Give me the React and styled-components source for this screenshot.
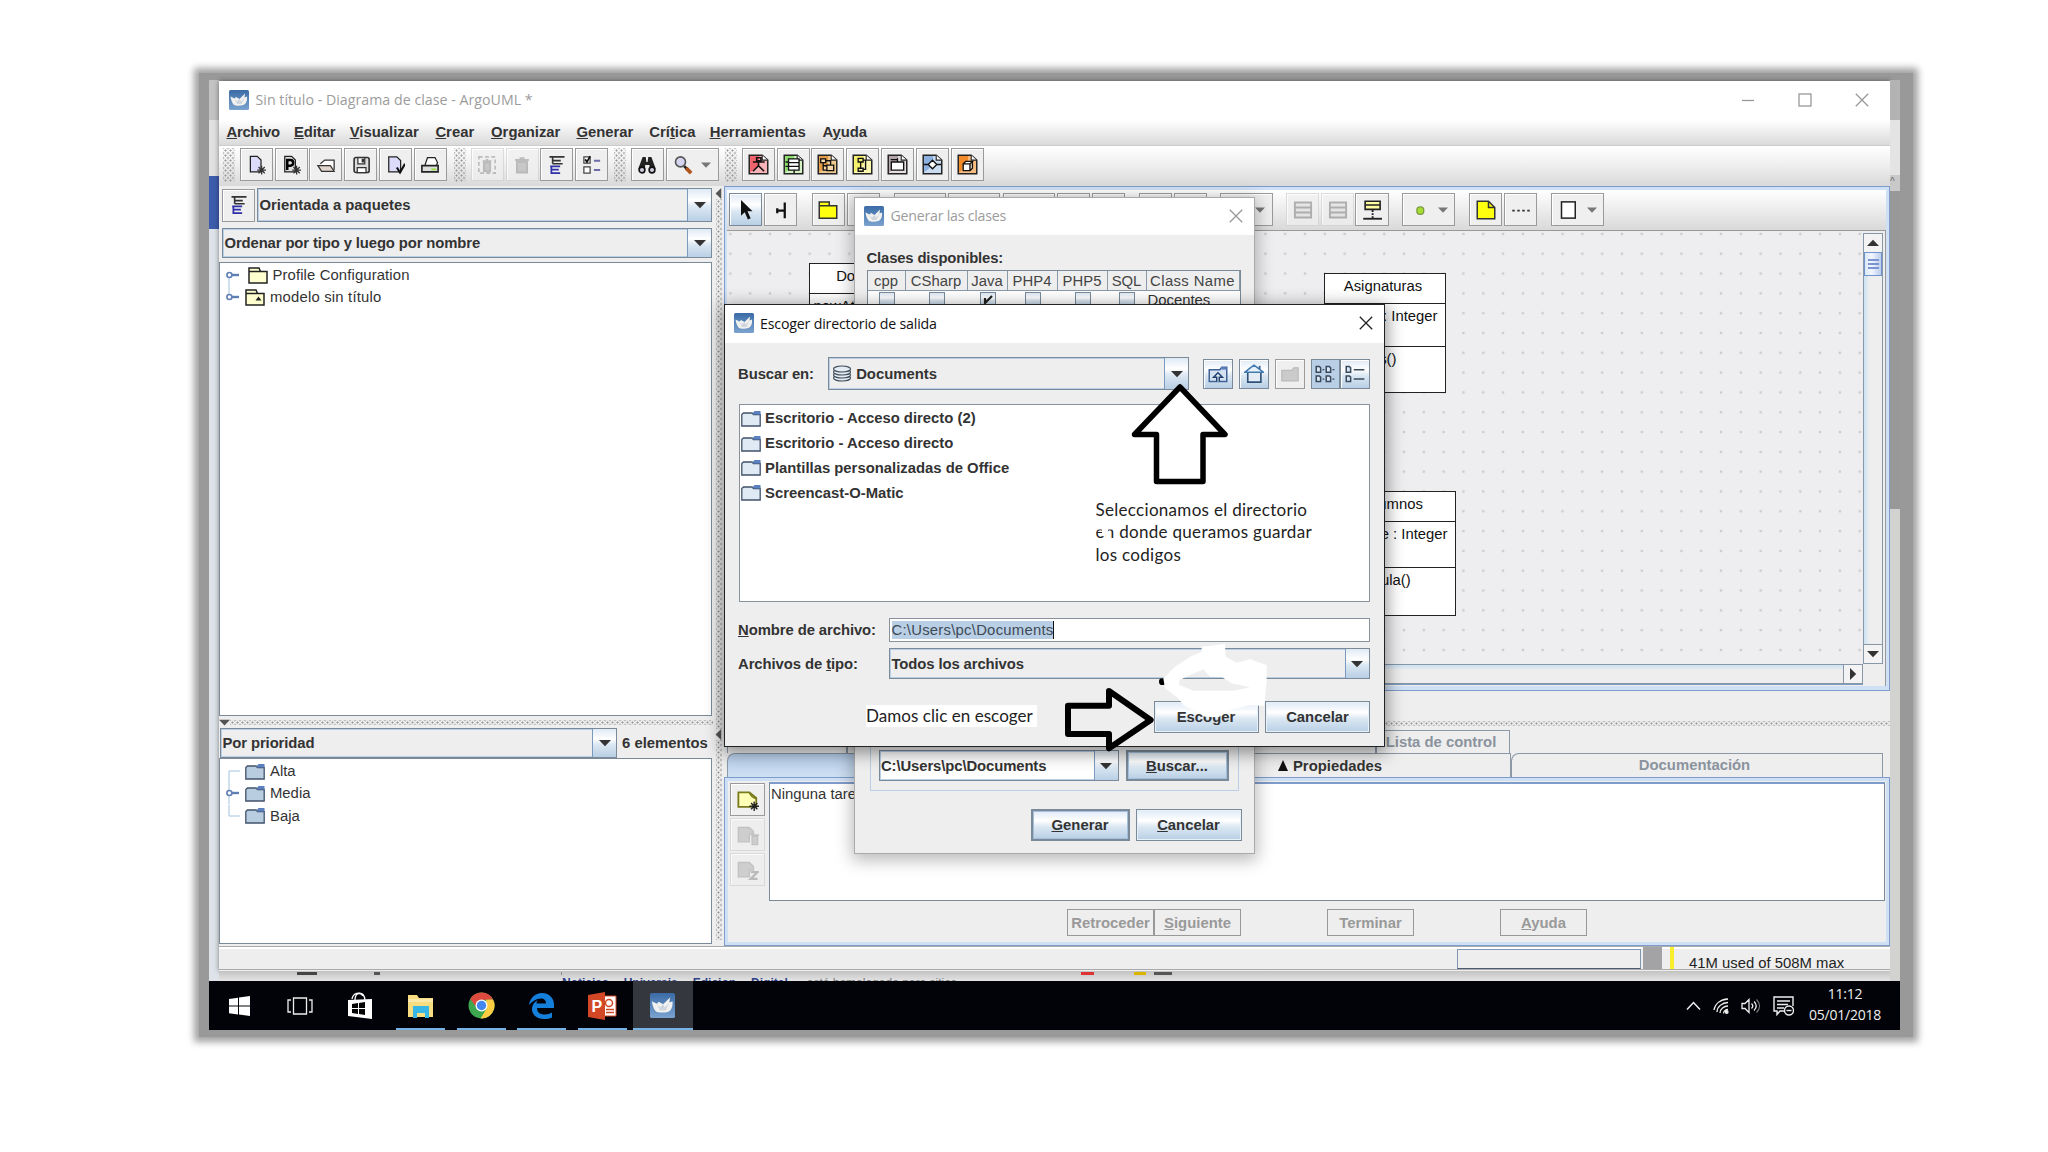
import React from "react";
import styled, { createGlobalStyle, css } from "styled-components";

const GlobalStyle = createGlobalStyle`
  * {
    box-sizing: border-box;
  }

  body {
    margin: 0;
    background: #fff;
    font-family: "Liberation Sans", Arial, sans-serif;
    font-size: 14.85px;
    color: #333;
    overflow: hidden;
  }
`;

const dots = css`
  background-image: radial-gradient(circle, #9a9a9a 0.8px, transparent 1.3px),
    radial-gradient(circle, #9a9a9a 0.8px, transparent 1.3px);
  background-size: 5px 5px;
  background-position: 0 0, 2.5px 2.5px;
`;

const steel = "linear-gradient(#dfeaf5, #fff 35%, #dce8f3 55%, #b8cfe5)";

const Page = styled.div`
  position: relative;
  width: 2048px;
  height: 1152px;
  padding: 73px 0 0 199px;
`;

const Frame = styled.div`
  width: 1714px;
  height: 964px;
  padding: 7px 13px 7px 10px;
  background: #999;
  box-shadow: 0 0 7px 5px #a2a2a2;
`;

const Screen = styled.div`
  width: 1691px;
  height: 950px;
  display: flex;
  flex-direction: column;
`;

const Desktop = styled.div`
  flex: 1;
  display: flex;
  min-height: 0;
`;

const LeftStrip = styled.div`
  width: 10px;
  background: linear-gradient(
    #c3c3c3 40px,
    #e0e0e0 40px 96px,
    #3d5cab 96px 149px,
    #dee3e9 149px
  );
`;

const RightStrip = styled.div`
  width: 10px;
  padding-top: 96px;
  font-size: 10px;
  color: #666;
  background: linear-gradient(
    #b3b3b3 40px,
    #e4e4e4 40px 95px,
    #c9c9c9 95px 111px,
    #989898 111px 429px,
    #d2d2d0 429px
  );
`;

const Center = styled.div`
  width: 1671px;
`;

const Main = styled.div`
  height: 890px;
  margin-top: 1px;
  background: #eee;
  display: flex;
  flex-direction: column;
  box-shadow: 0 0 5px rgba(0, 0, 0, 0.45);
`;

const Peek = styled.div`
  height: 10px;
  padding-top: 5px;
  display: flex;
  overflow: hidden;
  font-size: 12px;
  line-height: 14px;
  font-weight: bold;
  color: #2f4288;
  background: linear-gradient(#c2c2c2, #e4e4e4);
  white-space: nowrap;

  span {
    margin-right: 15px;
  }

  i {
    font-style: normal;
    font-weight: normal;
    color: #777;
    margin-left: 4px;
  }
`;

const Smudge = styled.div`
  width: ${(p) => p.$w}px;
  height: 3px;
  margin: -4px 0 0 ${(p) => p.$ml}px;
  flex: none;
  background: ${(p) => p.$c};
`;

const TitleBar = styled.div`
  display: flex;
  align-items: center;
  height: ${(p) => p.$h}px;
  flex: none;
  padding: 0 11px 2px ${(p) => p.$pl ?? 9}px;
  background: #fff;
  font-family: "Open Sans", "Noto Sans", sans-serif;
  font-size: 14.2px;
  letter-spacing: ${(p) => p.$ls ?? -0.24}px;
  color: ${(p) => (p.$active ? "#111" : "#9c9c9c")};

  > span {
    flex: 1;
    margin-left: 6.5px;
    white-space: nowrap;
  }
`;

const Controls = styled.div`
  display: flex;
  gap: 43px;
  padding-right: 10px;
`;

const MenuBar = styled.div`
  display: flex;
  align-items: center;
  flex: none;
  height: 26px;
  padding: 0 0 2px 7.5px;
  font-weight: bold;
  background: linear-gradient(#fff, #dadada);
  border-bottom: 1px solid #ccc;
`;

const MenuItem = styled.span`
  width: ${(p) => p.$w}px;
  letter-spacing: ${(p) => p.$ls || 0}px;
`;

const MainToolBar = styled.div`
  display: flex;
  align-items: center;
  flex: none;
  height: 40px;
  padding: 0 0 2px 4px;
  background: linear-gradient(#fff, #f0f0f0 45%, #d9d9d9);
`;

const ToolGroup = styled.div`
  display: flex;
  gap: 1.8px;
  width: ${(p) => p.$w}px;
`;

const Grip = styled.div`
  width: 12px;
  height: 34px;
  margin-right: 3px;
  ${dots}
`;

const Tool = styled.div`
  display: flex;
  align-items: center;
  justify-content: center;
  gap: 8px;
  flex: none;
  width: ${(p) => p.$w || 33}px;
  height: ${(p) => p.$h || 33}px;
  margin-left: ${(p) => p.$ml || 0}px;
  border: 1px solid ${(p) => (p.$off ? "#d2d2d2" : p.$on ? "#7a8a99" : "#9a9a9a")};
  background: ${(p) => (p.$pressed ? "#b8cfe5" : p.$on ? steel : "#efefef")};
  opacity: ${(p) => (p.$off ? 0.75 : 1)};
  box-shadow: ${(p) => (p.$pressed ? "none" : "inset 1px 1px 0 #fff")};
`;

const Body = styled.div`
  display: flex;
  flex: none;
  height: 760px;
`;

const Left = styled.div`
  width: 494px;
  padding-top: 2px;
  display: flex;
  flex-direction: column;
`;

const Row = styled.div`
  display: flex;
  align-items: center;
  flex: none;
  height: ${(p) => p.$h}px;
  margin-top: ${(p) => p.$mt || 0}px;
  padding-left: ${(p) => p.$pl || 0}px;
  gap: ${(p) => p.$gap || 0}px;
`;

const ComboBox = styled.div`
  display: flex;
  align-items: center;
  flex: none;
  width: ${(p) => p.$w}px;
  height: ${(p) => p.$h}px;
  padding-left: ${(p) => p.$pl || 1.5}px;
  border: 1px solid #7a8a99;
  box-shadow: inset 0 0 0 1px #b8cfe5;
  background: ${(p) => (p.$white ? "#fff" : "#eee")};
  font-weight: bold;
  letter-spacing: ${(p) => p.$ls || 0}px;
  white-space: nowrap;

  > span {
    flex: 1;
  }
`;

const ComboArrow = styled.div`
  display: flex;
  align-items: center;
  justify-content: center;
  width: 24px;
  height: 100%;
  border-left: 1px solid #7a9ac0;
  background: ${steel};
`;

const Tree = styled.div`
  flex: none;
  width: 493px;
  height: ${(p) => p.$h}px;
  margin-top: ${(p) => p.$mt || 0}px;
  padding-top: ${(p) => p.$pt}px;
  border: 1px solid #7a8a99;
  background: #fff;
`;

const TreeRow = styled.div`
  display: flex;
  align-items: center;
  height: 22.3px;
  padding-left: 6px;

  > span {
    margin-left: 5px;
    letter-spacing: ${(p) => p.$ls || 0}px;
  }
`;

const Folder = styled.svg`
  margin-left: ${(p) => p.$ml || 0}px;
  flex: none;
`;

const HSplit = styled.div`
  display: flex;
  align-items: center;
  flex: none;
  height: ${(p) => p.$h}px;

  div {
    flex: 1;
    height: 5px;
    ${dots}
  }
`;

const VSplit = styled.div`
  display: flex;
  flex-direction: column;
  align-items: center;
  width: 11px;
  padding-top: 2px;
`;

const VDots = styled.div`
  width: 6px;
  height: ${(p) => p.$len}px;
  ${dots}
`;

const Right = styled.div`
  width: 1166px;
  display: flex;
  flex-direction: column;
`;

const Editor = styled.div`
  flex: none;
  height: 505px;
  padding: 3px 3px 4px 2px;
  background: #cfe0f4;
  border: 1.5px solid #7d9bcb;
  display: flex;
  flex-direction: column;
`;

const EditorTools = styled.div`
  display: flex;
  align-items: flex-start;
  flex: none;
  height: 41px;
  padding: 3px 0 0 2px;
  background: linear-gradient(#fff, #f0f0f0 40%, #d9d9d9);
  border-bottom: 1px solid #999;
`;

const EditorBody = styled.div`
  flex: 1;
  display: grid;
  grid-template-columns: 1136px 20px;
  grid-template-rows: 432px 20px;
  background: #eee;
  border-right: 1px solid #999;
  padding-top: 1px;
`;

const Canvas = styled.div`
  position: relative;
  overflow: hidden;
  background-color: #eeedef;
  background-image: radial-gradient(circle, #cccccc 1px, transparent 1.7px);
  background-size: 19.82px 19.82px;
  background-position: -6.5px -8px;
`;

const ClassNode = styled.div`
  position: absolute;
  left: ${(p) => p.$x}px;
  top: ${(p) => p.$y}px;
  width: ${(p) => p.$w}px;
  border: 1.5px solid #222;
  background: #fff;
  color: #111;

  > div {
    height: ${(p) => p.$attrH || 43}px;
    padding: 4px ${(p) => p.$pr || 5}px 0 4px;
    border-top: 1.5px solid #222;
    text-align: ${(p) => p.$align || "right"};
    white-space: nowrap;
    overflow: hidden;
  }

  > div:first-child {
    height: 29px;
    border: 0;
    text-align: center;
  }

  > div:last-child {
    height: ${(p) => p.$opH || 46}px;
    padding-right: ${(p) => p.$opPad || 50}px;
  }
`;

const VScroll = styled.div`
  display: flex;
  flex-direction: column;
  height: 431px;
  margin-top: 1px;
  border: 1px solid #8797a8;
  box-shadow: inset 3px 0 3px #cfe3f3;

  > div:nth-child(2) {
    height: 24px;
    border: 1px solid #7093c9;
    background: linear-gradient(90deg, #dbe7f8, #f2f7ff 40%, #b9cdec);
    display: flex;
    flex-direction: column;
    justify-content: center;
    align-items: center;
    gap: 2px;
  }

  i {
    width: 11px;
    height: 2px;
    background: #7b93cf;
  }

  > span {
    flex: 1;
  }
`;

const HScroll = styled.div`
  display: flex;
  justify-content: flex-end;
  border: 1px solid #8797a8;
  box-shadow: inset 0 3px 3px #cfe3f3, 0 1px 0 #7a9ac0;
`;

const ScrollButton = styled.div`
  display: flex;
  align-items: center;
  justify-content: center;
  width: 18px;
  height: 18px;
  outline: 1px solid #8797a8;
  background: #f3f3f3;
`;

const Tabs = styled.div`
  display: flex;
  flex: none;
  height: ${(p) => p.$h}px;
  padding-left: 3px;
  font-weight: bold;
`;

const Tab = styled.div`
  display: flex;
  align-items: center;
  justify-content: center;
  gap: 5px;
  width: ${(p) => p.$w}px;
  padding: 0 ${(p) => p.$pr || 0}px ${(p) => p.$pb || 0}px 0;
  border: 1px solid #8b98a6;
  border-bottom: 0;
  border-top-left-radius: ${(p) => (p.$cut ? 8 : 0)}px;
  color: ${(p) => (p.$front ? "#333" : "#8a939d")};
  background: ${(p) => (p.$blue ? "linear-gradient(#b8d0ec, #cddff2)" : "#eee")};
`;

const Details = styled.div`
  flex: none;
  height: 169px;
  border: 1.5px solid #7d9bcb;
  background: #eee;
  box-shadow: inset 0 0 0 3px #cfe0f4;
  padding: 4px 4px 0 5px;
`;

const DetailsTop = styled.div`
  display: flex;
  gap: 4px;
  height: 119px;
`;

const SideTools = styled.div`
  display: flex;
  flex-direction: column;
  gap: 2px;
  padding-top: 1px;
  width: 35px;
`;

const TextPane = styled.div`
  flex: 1;
  padding: 2px 1px;
  border: 1px solid #7a8a99;
  border-top: 2px solid #7d9bcb;
  background: #fff;
`;

const Wizard = styled.div`
  display: flex;
  padding: 8px 0 0 337px;
  font-weight: bold;
  color: #999;
`;

const WizardButton = styled.div`
  width: 87px;
  height: 27px;
  margin-right: ${(p) => p.$mr || 0}px;
  border: 1px solid #999;
  display: flex;
  align-items: center;
  justify-content: center;
`;

const Status = styled.div`
  display: flex;
  flex: none;
  height: 24px;
  border-top: 1px solid #aaa;
  border-bottom: 1px solid #aaa;
  box-shadow: inset 0 2px 0 #fff;
`;

const Progress = styled.div`
  width: 184px;
  height: 20px;
  margin: 2px 2px 0 1238px;
  border: 1.5px solid #7f95b4;
  border-bottom-color: #4c5b72;
`;

const Block = styled.div`
  width: 19px;
  background: #a3a3a5;
`;

const Memory = styled.div`
  margin-left: 8px;
  border-left: 4px solid #f8ee2c;
  padding: 8px 0 0 15px;
  line-height: 16px;
  color: #222;
`;

const TaskBar = styled.div`
  display: flex;
  flex: none;
  height: 49px;
  background: #020308;
  color: #eee;
`;

const Task = styled.div`
  display: flex;
  align-items: center;
  justify-content: center;
  width: 60.5px;
  background: ${(p) => (p.$on ? "#34373d" : "none")};
  background-image: ${(p) =>
    p.$open || p.$on ? "linear-gradient(#76b4e8, #76b4e8)" : "none"};
  background-size: ${(p) => (p.$on ? "100%" : "49px")} 2.5px;
  background-repeat: no-repeat;
  background-position: bottom center;
`;

const Tray = styled.div`
  display: flex;
  align-items: center;
  gap: 12px;
  margin-left: auto;
  padding: 0 17px 0 0;
`;

const Clock = styled.div`
  width: 76px;
  margin: -2px 0 0 1px;
  text-align: center;
  font-family: "Open Sans", "Noto Sans", sans-serif;
  font-size: 14px;
  letter-spacing: -0.25px;
  line-height: 20.5px;
`;

const Window = styled.div`
  position: absolute;
  left: ${(p) => p.$x}px;
  top: ${(p) => p.$y}px;
  width: ${(p) => p.$w}px;
  height: ${(p) => p.$h}px;
  border: ${(p) => (p.$active ? "1.5px solid #222" : "1px solid #aaa")};
  background: #eee;
  box-shadow: 0 4px 16px 2px rgba(0, 0, 0, ${(p) => (p.$active ? 0.42 : 0.28)});
  display: flex;
  flex-direction: column;
`;

const GenerateBody = styled.div`
  flex: 1;
  display: flex;
  flex-direction: column;
  padding: 15px 12px 0 11.5px;

  > b {
    line-height: 17px;
    letter-spacing: -0.15px;
  }
`;

const ClassTable = styled.div`
  display: grid;
  grid-template-columns: 38px 62px 40px 50px 50px 39px 93px;
  width: 374px;
  margin-top: 3px;
  border: 1px solid #7a8a99;
  background: #eee;
  flex: none;
`;

const Th = styled.div`
  height: 20px;
  line-height: 21px;
  text-align: center;
  border-right: 1px solid #8a9aa9;
  border-bottom: 1px solid #8a9aa9;
  color: #444;
  white-space: nowrap;
  letter-spacing: ${(p) => p.$ls || 0}px;
`;

const Td = styled.div`
  height: 20px;
  line-height: 18px;
  padding: 0 1px;
  display: flex;
  justify-content: ${(p) => (p.$left ? "flex-start" : "center")};
  background: #fff;
`;

const Check = styled.div`
  width: 16px;
  height: 16px;
  margin-top: 1px;
  border: 1px solid #7a8a99;
  background: ${steel};
`;

const OutputBox = styled.div`
  display: flex;
  align-items: center;
  gap: 7px;
  width: 369px;
  height: 61px;
  margin: auto 0 0 3px;
  padding: 12px 8px 2px;
  border: 1px solid #b8cfe5;
  flex: none;
`;

const ButtonRow = styled.div`
  display: flex;
  justify-content: flex-end;
  flex: none;
  gap: ${(p) => p.$gap}px;
  margin: ${(p) => p.$mt}px ${(p) => p.$mr || 0}px 0 0;
  padding-bottom: ${(p) => p.$pb || 0}px;
`;

const Button = styled.div`
  display: flex;
  align-items: center;
  justify-content: center;
  width: ${(p) => p.$w}px;
  height: ${(p) => p.$h || 32}px;
  border: ${(p) => (p.$focus ? "2px" : "1px")} solid #7a8a99;
  box-shadow: inset 0 0 0 1px ${(p) => (p.$focus ? "#a3bfdc" : "#e9f1f8")};
  background: ${steel};
  font-weight: bold;
`;

const ChooserBody = styled.div`
  padding: 14px 13px 0 13.5px;
`;

const Label = styled.label`
  width: ${(p) => p.$w}px;
  font-weight: bold;
  letter-spacing: -0.08px;
  white-space: nowrap;
`;

const FileList = styled.div`
  height: 198px;
  margin: 14px 1px 0;
  padding: 1px 1px;
  border: 1px solid #8a939d;
  background: #fff;
  font-weight: bold;

  > div {
    display: flex;
    align-items: center;
    gap: 4px;
    height: 24.75px;
  }
`;

const Field = styled.div`
  flex: 1;
  display: flex;
  height: 24px;
  margin-right: 1px;
  padding: 2px 2px;
  border: 1px solid #8a939d;
  background: #fff;
  line-height: 19px;

  span {
    background: #b8cfe5;
    border-right: 1px solid #111;
    color: #3f4a55;
    letter-spacing: 0.25px;
  }
`;

const Note = styled.div`
  position: absolute;
  left: ${(p) => p.$x}px;
  top: ${(p) => p.$y}px;
  font-family: Lato, Carlito, sans-serif;
  font-size: 17px;
  line-height: 22.3px;
  letter-spacing: ${(p) => p.$ls}px;
  color: #222;
  background: #fff;
  white-space: pre;
`;

const Ink = styled.svg`
  position: absolute;
  left: ${(p) => p.$x}px;
  top: ${(p) => p.$y}px;
`;

const Triangle = ({ size = 12, dir = "down", color = "#333" }) => (
  <svg width={size} height={size} viewBox="0 0 12 12">
    <path
      d="M0 3h12L6 9.2z"
      fill={color}
      transform={`rotate(${{ down: 0, left: 90, up: 180, right: 270 }[dir]} 6 6)`}
    />
  </svg>
);

const Combo = ({ children, icon, ...rest }) => (
  <ComboBox {...rest}>
    {icon}
    <span>{children}</span>
    <ComboArrow>
      <Triangle />
    </ComboArrow>
  </ComboBox>
);

const Logo = ({ size = 20 }) => (
  <svg width={size} height={size} viewBox="0 0 20 20">
    <defs>
      <linearGradient id="sky" x1="0" y1="0" x2="0" y2="1">
        <stop offset="0" stopColor="#3b6ba6" />
        <stop offset="1" stopColor="#7ba3cf" />
      </linearGradient>
    </defs>
    <rect width="20" height="20" rx="1.500" fill="url(#sky)" />
    <path
      d="M1.500 6.500l4 2 1.500-1.500 3.500 2L16 3.500l-.5 4 2.500-1c.5 4-1 7.500-3.500 8.500-3 1-8 .8-9.500 0C3 13 2 10 1.500 6.500z"
      fill="#f1f1ef"
    />
    <path d="M5.500 8.500l2.500 3 2.500-2.500 1.500 2.500 3.500-4-3 6.500H8z" fill="#cfd6dd" />
  </svg>
);

const Close = ({ color = "#999" }) => (
  <svg width="14" height="14" viewBox="0 0 14 14">
    <path d="M.8.8l12.4 12.4M13.2.8L.8 13.2" stroke={color} strokeWidth="1.3" />
  </svg>
);

const Handle = ({ open = true, up, down }) => (
  <svg width="20" height="22.3" viewBox="0 0 20 22.3">
    {up && <path d="M3 0v11" stroke="#b8cfe5" strokeWidth="1.3" />}
    {down && <path d="M3 11v11.3" stroke="#b8cfe5" strokeWidth="1.3" />}
    {!open && <path d="M3 11h11" stroke="#b8cfe5" strokeWidth="1.3" />}
    {open && (
      <>
        <path d="M5 11h8" stroke="#5f7fb5" strokeWidth="2.4" />
        <circle cx="3.4" cy="11" r="2.5" fill="#fff" stroke="#5f7fb5" strokeWidth="1.6" />
      </>
    )}
  </svg>
);

const BlueFolder = ({ light, ml }) => (
  <Folder $ml={ml} width="20" height="17" viewBox="0 0 20 17">
    <path d="M.8 4.5L2.500 3h8.500l1.500 1.500h6.700V16H.8z" fill={light ? "#dfeaf4" : "#b9cde0"} stroke="#41526a" strokeWidth="1.3" />
    <path d="M11.500 3.200l2-2.200h6V4.500h-7z" fill="#5c7fc0" />
  </Folder>
);

const YellowFolder = ({ ml, model }) => (
  <Folder $ml={ml} width="20" height="17" viewBox="0 0 20 17">
    <path d="M1 4.5V1h10l1.500 3.500M1 4.500h18V16H1z" fill="#ffffcf" stroke="#222" strokeWidth="1.5" />
    {model && <path d="M10.500 11.500l3-4 3 4z" fill="#222" />}
  </Folder>
);

// 16px glyphs used by every toolbar
const glyphs = {
  newDoc: (
    <>
      <path d="M3.500 1h5.500l3 3V13.500h-8.500z" fill="#dcdcfa" stroke="#222" />
      <path d="M12.500 8.500v7M9 12h7M10 9.600l5 5M15 9.600l-5 5" stroke="#333" />
    </>
  ),
  newProject: (
    <>
      <path d="M3 1h5.500l3 3V13.500H3z" fill="#ddd" stroke="#222" />
      <path d="M5 12V4h2.500a2 2 0 010 4.500H5.500" fill="none" stroke="#000" strokeWidth="2" />
      <path d="M12.500 8.500v7M9 12h7M10 9.600l5 5M15 9.600l-5 5" stroke="#333" />
    </>
  ),
  open: (
    <>
      <path d="M3.500 7l3.500-3h7.500v8" fill="#fff" stroke="#333" />
      <path d="M1.500 8.500h10l3 4.500H4.500z" fill="#e2d5cb" stroke="#333" />
    </>
  ),
  save: (
    <>
      <rect x="2.500" y="2" width="12" height="12" rx="1.500" fill="#ddd" stroke="#333" strokeWidth="1.300" />
      <path d="M5.500 2h5.500v5H5.500zM5 10h7v4H5z" fill="#fff" stroke="#333" />
      <path d="M8.500 3h2v3h-2z" fill="#333" />
    </>
  ),
  props: (
    <>
      <path d="M3 1.500h6.500l3 3V13.500H3z" fill="#dcdcfa" stroke="#222" />
      <path d="M9.500 10l2.500 4 4-7" fill="none" stroke="#111" strokeWidth="1.700" />
    </>
  ),
  print: (
    <>
      <path d="M4 8l2-6h6l2 4-1 3" fill="#fff" stroke="#222" />
      <path d="M1.500 8.500h13V13.500h-13z" fill="#ddd" stroke="#222" strokeWidth="1.300" />
      <path d="M9 11.500h4" stroke="#9d4" strokeWidth="1.500" />
    </>
  ),
  removeDia: (
    <>
      <rect x="1.500" y="1.500" width="13" height="13" fill="none" stroke="#aaa" strokeWidth="1.300" strokeDasharray="3 2" />
      <path d="M4.500 5h7M5.500 6h5v7h-5zM7 4h2" fill="#bbb" stroke="#aaa" strokeWidth="1.500" />
    </>
  ),
  trash: <path d="M2.500 4h11M4 5.500h8V14H4zM6 2.500h4" fill="#bbb" stroke="#aaa" strokeWidth="1.600" />,
  tree: (
    <>
      <path d="M2 1.500h12M4.500 2v5M5 4.500h6M4.500 7h8" fill="none" stroke="#333" strokeWidth="1.300" />
      <path d="M2.500 9h8M3.500 9v5.500h7M3.500 11.700h6" fill="none" stroke="#2f2fa8" strokeWidth="1.400" />
    </>
  ),
  checks: (
    <>
      <path d="M1.500 1.500h5v5h-5zM1.500 9.500h5v5h-5z" fill="#fff" stroke="#444" />
      <path d="M2.500 3.500l1.500 2 2.500-4.500" fill="none" stroke="#111" strokeWidth="1.400" />
      <path d="M9.500 4.500h5M9.500 12h5" stroke="#6c6ca8" strokeWidth="1.600" />
    </>
  ),
  find: (
    <>
      <path d="M4.500 1.500h2.500l.5 4h1l.5-4h2.500l3.500 9.500h-5V8H6.500v3H1z" fill="#222" />
      <circle cx="4" cy="12" r="2.300" fill="#ccd" stroke="#111" strokeWidth="1.300" />
      <circle cx="12" cy="12" r="2.300" fill="#ccd" stroke="#111" strokeWidth="1.300" />
    </>
  ),
  zoom: (
    <>
      <circle cx="6" cy="5.500" r="4" fill="#d5d5f0" stroke="#555" strokeWidth="1.300" />
      <path d="M9 9l2 2" stroke="#222" strokeWidth="2" />
      <path d="M10.500 10.500l4 4" stroke="#b0541e" strokeWidth="3" />
    </>
  ),
  arrow: <path d="M4 0v12.500l3-2.700 2.500 5.700 2.200-1-2.500-5.500h4z" fill="#111" />,
  broom: <path d="M11 2v12.500M10.500 8.500H5.500M5 6.500v4" fill="none" stroke="#111" strokeWidth="1.800" />,
  pkg: <path d="M1 4.500V1.500h8v3M1 4.500h14V14.500H1z" fill="#ffff10" stroke="#333" strokeWidth="1.200" />,
  box: <path d="M2 3h12v10H2z" fill="#ffc" stroke="#333" />,
  attr: (
    <path d="M1.500 2h13v12h-13zM2 6h12M2 10h12" fill="#e2e2e2" stroke="#999" strokeWidth="1.500" />
  ),
  lollipop: (
    <>
      <path d="M2.500 1h12v6.500H2.500zM2.500 4h12" fill="#ffffa0" stroke="#222" strokeWidth="1.300" />
      <path d="M8.500 8v6.500" stroke="#222" strokeWidth="1.500" strokeDasharray="1.500 1" />
      <path d="M1 15h15" stroke="#222" strokeWidth="1.500" />
    </>
  ),
  green: <rect x="5.500" y="5.500" width="5.500" height="6" rx="2.500" fill="#a4dc32" stroke="#7c9a44" />,
  note: (
    <>
      <path d="M1 1h9l5 5v9H1z" fill="#ffff10" stroke="#333" strokeWidth="1.200" />
      <path d="M10 1v5h5" fill="none" stroke="#333" strokeWidth="1.200" />
    </>
  ),
  dash: <path d="M1 8.500h15" stroke="#333" strokeWidth="1.500" strokeDasharray="2 2" />,
  rect: <rect x="2" y="1.500" width="11" height="13" fill="#fff" stroke="#222" strokeWidth="1.200" />,
  newNote: (
    <>
      <path d="M1 2.500h8l5 4V13H1z" fill="#ffffb8" stroke="#7a7a1c" strokeWidth="1.300" />
      <path d="M9 2.500c1 3 3 4 5 4.500" fill="none" stroke="#7a7a1c" />
      <path d="M12.500 9v7M9 12.500h7M10.200 10.200l4.600 4.600M14.800 10.200l-4.600 4.600" stroke="#222" />
    </>
  ),
  doneNote: <path d="M1 2.500h8l3 3V7H9v6H1zM10 8h6M11 9h4v6h-4z" fill="#c4c4c4" stroke="#b4b4b4" />,
  snooze: (
    <>
      <path d="M1 2.500h8l3 3V8H9v5H1z" fill="#c4c4c4" stroke="#b4b4b4" />
      <path d="M10 9.500h5l-5 5h5" fill="none" stroke="#aaa" strokeWidth="1.700" />
    </>
  ),
  upFolder: (
    <>
      <path d="M1 14V4.500h8.500l1.500-2h4V14z" fill="#d3e1f0" stroke="#3f6396" strokeWidth="1.200" />
      <path d="M10.500 3.500H15" stroke="#5c7fc0" strokeWidth="2" />
      <path d="M7 14v-3.500H4.500L8 7l3.500 3.500H9V14" fill="#e8f0f8" stroke="#1f4070" strokeWidth="1.200" />
    </>
  ),
  home: (
    <>
      <path d="M3 6.500h10.500V14.500H3z" fill="#e3ecf5" stroke="#2f5078" strokeWidth="1.300" />
      <path d="M.8 6.500L4.500 3.500 8 1l3.500 2.500 4 3z" fill="#e8f0f8" stroke="#3f7ab0" strokeWidth="1.200" />
      <path d="M12.500 1.500v2.500" stroke="#3f6396" strokeWidth="1.500" />
    </>
  ),
  newFolder: <path d="M1.500 13.500V5h8l1.500-2H14.500v10.500z" fill="#cbcbcb" stroke="#bbb" />,
  grid: (
    <>
      <path d="M1 2h2.500l1 1v3.500H1zM9 2h2.500l1 1v3.500H9zM1 9.500h2.500l1 1V14H1zM9 9.500h2.500l1 1V14H9z" fill="#dce8f5" stroke="#3a4a5e" strokeWidth="1.200" />
      <path d="M6 4.500h1.500M14 4.500h1.500M6 12h1.500M14 12h1.500" stroke="#3a4a5e" />
    </>
  ),
  details: (
    <>
      <path d="M1 2h2.500l1 1v3.500H1zM1 9.500h2.500l1 1V14H1z" fill="#dce8f5" stroke="#3a4a5e" strokeWidth="1.200" />
      <path d="M7 4.500h8.500M7 12h8.500" stroke="#3a4a5e" strokeWidth="1.200" />
    </>
  ),
};

const Glyph = ({ name, size = 20 }) => (
  <svg width={size} height={size} viewBox="0 0 16 16">
    {glyphs[name]}
  </svg>
);

// diagram pages: coloured sheet with a folded corner and a small symbol
const diagrams = [
  ["#f0626c", "#f8b4b8", <path key="a" d="M7 3h3.500v2.500H7zM4 6.500h9.500M8.500 6v3.500M8.500 9.500L4 14M8.500 9.500l4.500 4.500" strokeWidth="1.300" />],
  ["#8bdc6c", "#d4f2c4", <path key="b" d="M4.500 4h8.500v9H4.500zM4.500 7h8.500M4.500 10h8.500M9 13v3M2 6.500h2.500M2 10h2.500" fill="#fff" />],
  ["#e39b45", "#f0c98e", <path key="c" d="M3 4h4v3H3zM5 7v6h3M8 9h5.500v4.500H8zM7 5.500h4V9M5 9.500h3" fill="#f6d9a8" />],
  ["#f5f06a", "#fbf8b0", <path key="d" d="M5 3.500h4v3H5zM5 11.500h4v2.500H5zM9 5h2v7.500H9M7 6.500v5" fill="none" />],
  ["#b3a3aa", "#e6e0e4", <path key="e" d="M3.500 6.500h10v6.500h-10zM8.500 6.500V3.500M3 4.500h5" fill="#fff" />],
  ["#8cb1e0", "#c9dcf2", <path key="f" d="M8.500 5l3.500 3.500L8.500 12 5 8.500zM1.500 8.500H5M12 8.500h3.500" fill="#fff" />],
  ["#f08a28", "#f8bd80", <path key="g" d="M5 8h5.500v5.500H5zM5 8l2-2h5.500l-2 2M12.500 6v5.500l-2 2" fill="#fff" />],
];

const Sheet = ({ data: [dark, pale, shape] }) => (
  <svg width="21" height="21" viewBox="0 0 17 17">
    <path d="M1 1h10.500L16 5v11H1z" fill={pale} stroke="#222" strokeWidth="1.200" />
    <path d="M1.700 1.700H9V9l-7.300 6z" fill={dark} />
    <path d="M11.500 1v4H16" fill="#fff" stroke="#222" strokeWidth=".9" />
    <g stroke="#111" strokeWidth="1.100" fill="none">
      {shape}
    </g>
  </svg>
);

const Disk = () => (
  <svg width="20" height="18" viewBox="0 0 20 18">
    {[13, 10, 7, 4].map((y) => (
      <ellipse
        key={y}
        cx="10"
        cy={y}
        rx="8.500"
        ry="3"
        fill="#e4ebf2"
        stroke="#3e4b58"
        strokeWidth="1.100"
      />
    ))}
  </svg>
);

const editorTools = [
  { w: 33, on: true, g: "arrow" },
  { w: 33, ml: 2, g: "broom" },
  { w: 33, ml: 14.5, g: "pkg" },
  { w: 33, ml: 2, g: "box" },
  { w: 52, ml: 14 },
  { w: 52, ml: 2 },
  { w: 52, ml: 3 },
  { w: 33, ml: 2 },
  { w: 33, ml: 2 },
  { w: 33, ml: 14 },
  { w: 33, ml: 2 },
  { w: 53, ml: 13, menu: true, g: "box" },
  { w: 33, ml: 13.5, off: true, g: "attr" },
  { w: 33, ml: 2, off: true, g: "attr" },
  { w: 34, ml: 1, g: "lollipop" },
  { w: 53, ml: 13, menu: true, g: "green" },
  { w: 33, ml: 14, g: "note" },
  { w: 33, ml: 2, g: "dash" },
  { w: 53, ml: 14, menu: true, g: "rect" },
];

const menu = [
  ["", "A", "rchivo", 67.5, -0.3],
  ["", "E", "ditar", 55.7, -0.1],
  ["", "V", "isualizar", 85.7],
  ["", "C", "rear", 55.7],
  ["", "O", "rganizar", 85.4],
  ["", "G", "enerar", 72.8],
  ["Crí", "t", "ica", 60.4],
  ["", "H", "erramientas", 112.9, 0.1],
  ["A", "y", "uda", 50, -0.1],
];

const columns = [
  ["cpp"],
  ["CSharp"],
  ["Java"],
  ["PHP4"],
  ["PHP5"],
  ["SQL"],
  ["Class Name", 0.4],
];

const files = [
  "Escritorio - Acceso directo (2)",
  "Escritorio - Acceso directo",
  "Plantillas personalizadas de Office",
  "Screencast-O-Matic",
];

const MainWindow = () => (
  <Main>
    <TitleBar $h={39} $pl={10} $ls={0.02}>
      <Logo />
      <span>Sin título - Diagrama de clase - ArgoUML *</span>
      <Controls>
        <svg width="14" height="14" viewBox="0 0 14 14">
          <path d="M1 7.500h12" stroke="#999" strokeWidth="1.300" />
        </svg>
        <svg width="14" height="14" viewBox="0 0 14 14">
          <rect x="1" y="1" width="12" height="12" fill="none" stroke="#999" strokeWidth="1.300" />
        </svg>
        <Close />
      </Controls>
    </TitleBar>
    <MenuBar>
      {menu.map(([pre, key, post, w, ls]) => (
        <MenuItem key={post} $w={w} $ls={ls}>
          {pre}
          <u>{key}</u>
          {post}
        </MenuItem>
      ))}
    </MenuBar>
    <MainToolBar>
      <ToolGroup $w={231}>
        <Grip />
        {["newDoc", "newProject", "open", "save", "props", "print"].map((g) => (
          <Tool key={g}>
            <Glyph name={g} />
          </Tool>
        ))}
      </ToolGroup>
      <ToolGroup $w={160}>
        <Grip />
        {["removeDia", "trash", "tree", "checks"].map((g, i) => (
          <Tool key={g} $off={i < 2}>
            <Glyph name={g} />
          </Tool>
        ))}
      </ToolGroup>
      <ToolGroup $w={111}>
        <Grip />
        <Tool>
          <Glyph name="find" />
        </Tool>
        <Tool $w={53}>
          <Glyph name="zoom" />
          <Triangle size={10} color="#777" />
        </Tool>
      </ToolGroup>
      <ToolGroup>
        <Grip />
        {diagrams.map((d) => (
          <Tool key={d[0]}>
            <Sheet data={d} />
          </Tool>
        ))}
      </ToolGroup>
    </MainToolBar>
    <Body>
      <Left>
        <Row $h={34} $pl={3} $gap={2}>
          <Tool>
            <Glyph name="tree" />
          </Tool>
          <Combo $w={455} $h={34}>
            Orientada a paquetes
          </Combo>
        </Row>
        <Row $h={30} $mt={6} $pl={3}>
          <Combo $w={490} $h={30} $ls={-0.12}>
            Ordenar por tipo y luego por nombre
          </Combo>
        </Row>
        <Tree $h={454} $mt={4} $pt={1}>
          <TreeRow $ls={0.12}>
            <Handle down />
            <YellowFolder ml={1.5} />
            <span>Profile Configuration</span>
          </TreeRow>
          <TreeRow $ls={0.2}>
            <Handle up />
            <YellowFolder ml={-1} model />
            <span>modelo sin título</span>
          </TreeRow>
        </Tree>
        <HSplit $h={12}>
          <Triangle size={11} color="#555" />
          <div />
        </HSplit>
        <Row $h={30} $pl={1} $gap={5}>
          <Combo $w={397} $h={30} $ls={-0.1}>
            Por prioridad
          </Combo>
          <b>6 elementos</b>
        </Row>
        <Tree $h={186} $pt={1}>
          <TreeRow>
            <Handle open={false} down />
            <BlueFolder ml={-1} />
            <span>Alta</span>
          </TreeRow>
          <TreeRow>
            <Handle up down />
            <BlueFolder ml={-1} />
            <span>Media</span>
          </TreeRow>
          <TreeRow>
            <Handle open={false} up />
            <BlueFolder ml={-1} />
            <span>Baja</span>
          </TreeRow>
        </Tree>
      </Left>
      <VSplit>
        <Triangle size={11} dir="left" color="#555" />
        <VDots $len={530} />
        <Triangle size={11} dir="left" color="#555" />
        <VDots $len={200} />
      </VSplit>
      <Right>
        <Editor>
          <EditorTools>
            {editorTools.map((t, i) => (
              <Tool key={i} $w={t.w} $ml={t.ml} $on={t.on} $off={t.off}>
                {t.g && <Glyph name={t.g} />}
                {t.menu && <Triangle size={10} color="#777" />}
              </Tool>
            ))}
          </EditorTools>
          <EditorBody>
            <Canvas>
              <ClassNode $x={81.5} $y={31} $w={119} $align="left">
                <div>Docentes</div>
                <div>newAttr : Integer</div>
                <div />
              </ClassNode>
              <ClassNode $x={596.5} $y={41} $w={122} $pr={7} $opPad={48}>
                <div>Asignaturas</div>
                <div>codigo : Integer</div>
                <div>cursos()</div>
              </ClassNode>
              <ClassNode $x={608.5} $y={259} $w={120} $pr={7} $attrH={46} $opPad={47} $opH={48}>
                <div>Alumnos</div>
                <div>clave : Integer</div>
                <div>matricula()</div>
              </ClassNode>
            </Canvas>
            <VScroll>
              <ScrollButton>
                <Triangle dir="up" />
              </ScrollButton>
              <div>
                <i />
                <i />
                <i />
              </div>
              <span />
              <ScrollButton>
                <Triangle />
              </ScrollButton>
            </VScroll>
            <HScroll>
              <ScrollButton>
                <Triangle dir="right" />
              </ScrollButton>
            </HScroll>
          </EditorBody>
        </Editor>
        <Row $h={29} />
        <HSplit $h={6}>
          <div />
        </HSplit>
        <Row $h={4} />
        <Tabs $h={23}>
          <Tab $w={120} />
          <Tab $w={529} />
          <Tab $w={134} $pr={4}>
            Lista de control
          </Tab>
        </Tabs>
        <Tabs $h={24}>
          <Tab $w={425} $blue $cut />
          <Tab $w={359} $front $pr={3}>
            <svg width="10" height="11" viewBox="0 0 10 11">
              <path d="M0 11L5 0l5 11z" fill="#111" />
            </svg>
            Propiedades
          </Tab>
          <Tab $w={372} $cut $pr={5} $pb={2}>
            Documentación
          </Tab>
        </Tabs>
        <Details>
          <DetailsTop>
            <SideTools>
              <Tool $w={35} $h={33}>
                <Glyph name="newNote" size={22} />
              </Tool>
              <Tool $w={35} $h={33} $off>
                <Glyph name="doneNote" size={22} />
              </Tool>
              <Tool $w={35} $h={33} $off>
                <Glyph name="snooze" size={22} />
              </Tool>
            </SideTools>
            <TextPane>Ninguna tarea</TextPane>
          </DetailsTop>
          <Wizard>
            <WizardButton>Retroceder</WizardButton>
            <WizardButton $mr={86}>
              <span>
                <u>S</u>iguiente
              </span>
            </WizardButton>
            <WizardButton $mr={86}>Terminar</WizardButton>
            <WizardButton>
              <span>
                <u>A</u>yuda
              </span>
            </WizardButton>
          </Wizard>
        </Details>
      </Right>
    </Body>
    <Status>
      <Progress />
      <Block />
      <Memory>41M used of 508M max</Memory>
    </Status>
  </Main>
);

const GenerateDialog = () => (
  <Window $x={854} $y={197} $w={400.5} $h={657}>
    <TitleBar $h={37}>
      <Logo />
      <span>Generar las clases</span>
      <Close />
    </TitleBar>
    <GenerateBody>
      <b>Clases disponibles:</b>
      <ClassTable>
        {columns.map(([name, ls]) => (
          <Th key={name} $ls={ls}>
            {name}
          </Th>
        ))}
        {[0, 1, 2, 3, 4, 5].map((i) => (
          <Td key={i}>
            <Check>
              {i === 2 && (
                <svg width="14" height="14" viewBox="0 0 14 14">
                  <path d="M4 5v5l7-7" fill="none" stroke="#222" strokeWidth="2.200" />
                </svg>
              )}
            </Check>
          </Td>
        ))}
        <Td $left>Docentes</Td>
      </ClassTable>
      <OutputBox>
        <Combo $w={240} $h={31} $white $ls={-0.1}>
          C:\Users\pc\Documents
        </Combo>
        <Button $w={103} $h={31} $focus>
          <span>
            <u>B</u>uscar...
          </span>
        </Button>
      </OutputBox>
      <ButtonRow $gap={6} $mt={18} $pb={12}>
        <Button $w={99} $focus>
          <span>
            <u>G</u>enerar
          </span>
        </Button>
        <Button $w={106}>
          <span>
            <u>C</u>ancelar
          </span>
        </Button>
      </ButtonRow>
    </GenerateBody>
  </Window>
);

const ChooserDialog = () => (
  <Window $x={723.5} $y={304} $w={661.5} $h={443} $active>
    <TitleBar $h={38} $active $ls={-0.18}>
      <Logo />
      <span>Escoger directorio de salida</span>
      <Close color="#222" />
    </TitleBar>
    <ChooserBody>
      <Row $h={33}>
        <Label $w={90}>Buscar en:</Label>
        <Combo $w={361} $h={33} $pl={3} icon={<><Disk />&nbsp;</>}>
          Documents
        </Combo>
        <Tool $ml={13.5} $w={30} $h={30} $on>
          <Glyph name="upFolder" />
        </Tool>
        <Tool $ml={6} $w={30} $h={30} $on>
          <Glyph name="home" />
        </Tool>
        <Tool $ml={6} $w={30} $h={30}>
          <Glyph name="newFolder" />
        </Tool>
        <Tool $ml={6} $w={29.5} $h={30} $on $pressed>
          <Glyph name="grid" />
        </Tool>
        <Tool $w={29.5} $h={30} $on>
          <Glyph name="details" />
        </Tool>
      </Row>
      <FileList>
        {files.map((f) => (
          <div key={f}>
            <BlueFolder light />
            {f}
          </div>
        ))}
      </FileList>
      <Row $h={24} $mt={15.5}>
        <Label $w={150.5}>
          <u>N</u>ombre de archivo:
        </Label>
        <Field>
          <span>C:\Users\pc\Documents</span>
        </Field>
      </Row>
      <Row $h={31} $mt={6.5}>
        <Label $w={150.5}>
          Archivos de <u>t</u>ipo:
        </Label>
        <Combo $w={481} $h={31} $pl={2} $ls={-0.1}>
          Todos los archivos
        </Combo>
      </Row>
      <ButtonRow $gap={6.5} $mt={21.5} $mr={1}>
        <Button $w={105}>Escoger</Button>
        <Button $w={105}>Cancelar</Button>
      </ButtonRow>
    </ChooserBody>
  </Window>
);

const Taskbar = () => (
  <TaskBar>
    <Task>
      <svg width="21" height="20" viewBox="0 0 21 20">
        <path d="M0 3l9-1.300V9.500H0zM10 1.500L21 0v9.500H10zM0 10.500h9v8L0 17.200zM10 10.500h11V20l-11-1.500z" fill="#fff" />
      </svg>
    </Task>
    <Task>
      <svg width="26" height="18" viewBox="0 0 26 18" fill="none" stroke="#eee" strokeWidth="1.300">
        <path d="M6.500 1h13v16h-13zM4 3H1v12h3M22 3h3v12h-3" />
      </svg>
    </Task>
    <Task>
      <svg width="26" height="29" viewBox="0 0 26 29">
        <path d="M8 9c0-9 9-9 10 0M5 8c1-6 8-8 11-3" fill="none" stroke="#fff" strokeWidth="1.300" />
        <path d="M1 9l24-1v20L1 25z" fill="#fff" />
        <path d="M5 13l6-1v5H5zM12 12l6-1v6h-6zM5 18h6v5l-6-1zM12 18h6v6l-6-1z" fill="#050505" />
      </svg>
    </Task>
    <Task $open>
      <svg width="27" height="24" viewBox="0 0 27 24">
        <path d="M1 1h9l2 3h14v19H1z" fill="#f7dc80" />
        <path d="M1 5h25v3H1z" fill="#fbe9a9" />
        <path d="M6 12h16v12h-4v-5h-8v5H6z" fill="#38b7e6" />
      </svg>
    </Task>
    <Task $open>
      <svg width="27" height="27" viewBox="0 0 27 27">
        <circle cx="13.500" cy="13.500" r="13" fill="#3da750" />
        <path d="M2.200 7A13 13 0 0125 7.500L13.500 8 9 16z" fill="#dd4b3e" />
        <path d="M25 7.500A13 13 0 0112.500 26.500L19 16l-1-8.200z" fill="#fccd42" />
        <circle cx="13.500" cy="13.500" r="6" fill="#fff" />
        <circle cx="13.500" cy="13.500" r="4.700" fill="#4286f0" />
      </svg>
    </Task>
    <Task $open>
      <svg width="25" height="26" viewBox="0 0 25 26">
        <path
          d="M0 12C1 5 6 0 13 0c8 0 12 6 12 12v3H8c0 5 4 6.500 8 6.500 3 0 5-.8 7-2v5c-2 1-5 1.500-8 1.500C8 26 3 22 3 16c0-4 2-7 6-9-1 1-1.300 2-1.500 3.500H17C17 7 15 5.500 12 5.500c-5 0-9 3-12 6.500z"
          fill="#1480dc"
        />
      </svg>
    </Task>
    <Task $open>
      <svg width="29" height="28" viewBox="0 0 29 28">
        <path d="M15 4h13v20H15z" fill="#fff" stroke="#d24726" />
        <circle cx="21" cy="11" r="3.500" fill="none" stroke="#d24726" strokeWidth="1.500" />
        <path d="M18 17.500h8M18 20.500h8" stroke="#d24726" strokeWidth="1.300" />
        <path d="M0 3l17-3v28L0 25z" fill="#d24726" />
        <text x="3.500" y="20" fontSize="16" fontWeight="bold" fill="#fff">P</text>
      </svg>
    </Task>
    <Task $on>
      <Logo size={25} />
    </Task>
    <Tray>
      <svg width="15" height="10" viewBox="0 0 15 10">
        <path d="M1 8.500L7.500 1.500 14 8.500" fill="none" stroke="#eee" strokeWidth="1.500" />
      </svg>
      <svg width="16" height="16" viewBox="0 0 16 16" fill="none" stroke="#eee" strokeWidth="1.300">
        <path d="M1 12C2 6 7 1.500 15 1M4 14C4 9 9 4.500 15 4.500M7 15c0-4 4-7 8-7M10.500 15.500c0-2 2-4 4.500-4" />
        <circle cx="13.700" cy="14" r="1.300" fill="#eee" />
      </svg>
      <svg width="20" height="16" viewBox="0 0 20 16" fill="none" stroke="#eee" strokeWidth="1.300">
        <path d="M1 5.500h3l4-4v13l-4-4H1zM10.500 5.500c1.500 1.500 1.500 3.500 0 5M13 3.500c3 3 3 6 0 9" />
        <path d="M15.500 1.500c4 4 4 9 0 13" stroke="#777" />
      </svg>
      <svg width="21" height="20" viewBox="0 0 21 20" fill="none" stroke="#eee" strokeWidth="1.400">
        <path d="M11 15H7l-3 3.500V15H1V1h19v9M4 5h13M4 8.500h11M4 12h7" />
        <circle cx="16" cy="14.500" r="4.500" />
        <path d="M13.500 14.500h5" />
      </svg>
      <Clock>
        11:12
        <br />
        05/01/2018
      </Clock>
    </Tray>
  </TaskBar>
);

const Notes = () => (
  <>
    <Note $x={866} $y={705} $ls={0.05}>
      {"Damos clic en escoger "}
    </Note>
    <Note $x={1095.5} $y={499} $ls={0.3}>
      {"Seleccionamos el directorio\nen donde queramos guardar\nlos codigos"}
    </Note>
    <Ink $x={1120} $y={370} width="120" height="125">
      <path
        d="M60 17L105 64.500H83V111.500H36.500V64.500H14.500z"
        fill="#fff"
        stroke="#000"
        strokeWidth="5.500"
        strokeLinejoin="round"
      />
    </Ink>
    <Ink $x={1094} $y={521} width="24" height="20">
      <path d="M0 0h22v8.500H0zM8 8h6v5H8zM11.500 13h3v6h-3z" fill="#fff" />
    </Ink>
    <Ink $x={1050} $y={630} width="240" height="125" viewBox="0 0 720 375">
      <circle cx="337" cy="155" r="10" fill="#000" />
      <path
        d="M455 50L525 42 527 80 560 98 600 88 650 105 650 150 643 228 600 225 540 240 505 262 465 260 440 245 400 225 385 205 345 175 340 145 375 110 420 80 455 65zM388 150L388 165 430 182 550 182 600 172 545 160 515 140 480 140 460 118z"
        fill="#fff"
        fillRule="evenodd"
      />
      <path
        d="M54 227H177V183L302 270 177 355V312H54z"
        fill="none"
        stroke="#000"
        strokeWidth="18"
        strokeLinejoin="round"
      />
    </Ink>
  </>
);

const App = () => {
  return (
    <Page>
      <GlobalStyle />
      <Frame>
        <Screen>
          <Desktop>
            <LeftStrip />
            <Center>
              <MainWindow />
              <Peek>
                <Smudge $w={20} $ml={78} $c="#444" />
                <Smudge $w={6} $ml={57} $c="#555" />
                <Smudge $w={1} $ml={181} $c="#888" />
                <span>Noticias</span>
                <span>Universia</span>
                <span>Edicion</span>
                <span>Digital</span>
                <i>está homologado para sitios</i>
                <Smudge $w={13} $ml={124} $c="#d33" />
                <Smudge $w={12} $ml={40} $c="#d9b400" />
                <Smudge $w={18} $ml={8} $c="#555" />
              </Peek>
            </Center>
            <RightStrip>^</RightStrip>
          </Desktop>
          <Taskbar />
        </Screen>
      </Frame>
      <GenerateDialog />
      <ChooserDialog />
      <Notes />
    </Page>
  );
};

export default App;
